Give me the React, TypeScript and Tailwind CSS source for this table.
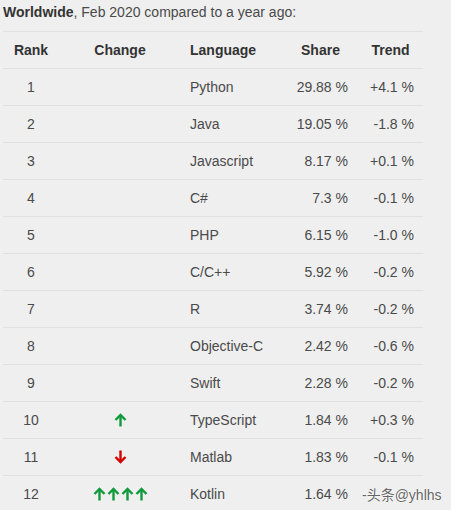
import React from "react";

type Row = {
  rank: number;
  change?: "up" | "down" | "up4";
  language: string;
  share: string;
  trend: string;
};

const rows: Row[] = [
  { rank: 1, language: "Python", share: "29.88 %", trend: "+4.1 %" },
  { rank: 2, language: "Java", share: "19.05 %", trend: "-1.8 %" },
  { rank: 3, language: "Javascript", share: "8.17 %", trend: "+0.1 %" },
  { rank: 4, language: "C#", share: "7.3 %", trend: "-0.1 %" },
  { rank: 5, language: "PHP", share: "6.15 %", trend: "-1.0 %" },
  { rank: 6, language: "C/C++", share: "5.92 %", trend: "-0.2 %" },
  { rank: 7, language: "R", share: "3.74 %", trend: "-0.2 %" },
  { rank: 8, language: "Objective-C", share: "2.42 %", trend: "-0.6 %" },
  { rank: 9, language: "Swift", share: "2.28 %", trend: "-0.2 %" },
  { rank: 10, change: "up", language: "TypeScript", share: "1.84 %", trend: "+0.3 %" },
  { rank: 11, change: "down", language: "Matlab", share: "1.83 %", trend: "-0.1 %" },
  { rank: 12, change: "up4", language: "Kotlin", share: "1.64 %", trend: "" },
];

function Arrow({ down = false }: { down?: boolean }) {
  const color = down ? "#d40000" : "#109a3c";
  return (
    <svg width="13" height="14" viewBox="0 0 13 14" className="block">
      <g
        fill="none"
        stroke={color}
        strokeWidth="2.4"
        strokeLinecap="butt"
        strokeLinejoin="miter"
        transform={down ? "rotate(180 6.5 7)" : undefined}
      >
        <path d="M6.5 2.2 V13.5" />
        <path d="M1.5 7 L6.5 2 L11.5 7" />
      </g>
    </svg>
  );
}

function Change({ kind }: { kind?: Row["change"] }) {
  if (!kind) return null;
  if (kind === "up4")
    return (
      <div className="flex gap-px">
        <Arrow />
        <Arrow />
        <Arrow />
        <Arrow />
      </div>
    );
  return <Arrow down={kind === "down"} />;
}

const cols = "grid grid-cols-[56px_122px_102px_75px_65px]";

export default function App() {
  return (
    <div
      className="relative w-[451px] h-[510px] overflow-hidden bg-[#efefef] text-[14px] text-[#4a4a4a]"
      style={{ fontFamily: '"Liberation Sans", Arial, sans-serif' }}
    >
      {/* Title */}
      <div className="h-[31px] pl-[3px] pt-[4px] text-[14px] leading-[17px] text-[#4a4a4a]">
        <b className="text-[#333]">Worldwide</b>, Feb 2020 compared to a year ago:
      </div>

      <div className="ml-[3px] w-[420px]">
        {/* Header */}
        <div className={`${cols} h-[37px] items-center border-t border-[#e0e0e0] font-bold text-[#333]`}>
          <div className="text-center">Rank</div>
          <div className="text-center">Change</div>
          <div className="pl-[9px]">Language</div>
          <div className="text-center">Share</div>
          <div className="text-center">Trend</div>
        </div>

        {rows.map((r) => (
          <div
            key={r.rank}
            className={`${cols} h-[37px] items-center border-t border-[#e0e0e0]`}
          >
            <div className="text-center">{r.rank}</div>
            <div className="flex justify-center">
              <Change kind={r.change} />
            </div>
            <div className="pl-[9px]">{r.language}</div>
            <div className="text-right pr-[10px]">{r.share}</div>
            <div className="text-right pr-[9px]">{r.trend}</div>
          </div>
        ))}
      </div>

      {/* Watermark */}
      <div
        className="absolute left-[362px] top-[485px] text-[14px] text-[#666]"
        style={{
          fontFamily: '"Liberation Sans", "Noto Sans CJK SC", sans-serif',
          textShadow: "0 0 2px #fff, 0 0 1px #fff",
        }}
      >
        -头条@yhlhs
      </div>
    </div>
  );
}
